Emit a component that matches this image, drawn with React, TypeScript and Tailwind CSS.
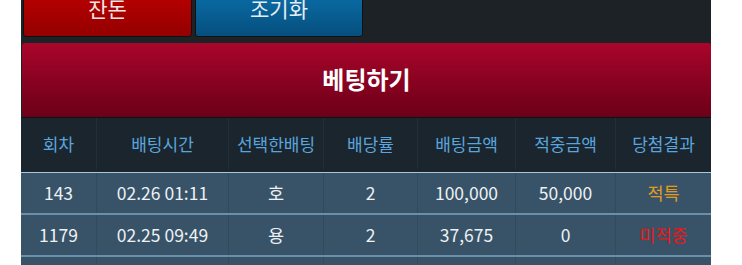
const cols = "grid grid-cols-[76px_132px_95px_94px_98px_100px_95px]";

const headers = ["회차", "배팅시간", "선택한배팅", "배당률", "배팅금액", "적중금액", "당첨결과"];

const rows = [
  { round: "143", time: "02.26 01:11", pick: "호", odds: "2", bet: "100,000", win: "50,000", result: "적특", tone: "text-[#e39b1f]" },
  { round: "1179", time: "02.25 09:49", pick: "용", odds: "2", bet: "37,675", win: "0", result: "미적중", tone: "text-[#f01414]" },
  { round: "1178", time: "02.25 09:48", pick: "호", odds: "2", bet: "20,000", win: "40,000", result: "적중", tone: "text-[#e39b1f]" },
];

export default function App() {
  return (
    <div className="h-[265px] overflow-hidden bg-white font-['Noto_Sans_CJK_KR','Noto_Sans',sans-serif]">
      <div className="ml-[21px] w-[690px] bg-[#1c2226]">
        {/* top buttons, partly scrolled out of view */}
        <div className="-mt-[19px] flex gap-[3px] pl-[2px]">
          <button className="flex h-[56px] w-[169px] items-center justify-center rounded-[3px] border border-[#111] bg-gradient-to-b from-[#c20000] to-[#940000] text-[21px] text-[#f2e6e6]">
            잔돈
          </button>
          <button className="flex h-[56px] w-[168px] items-center justify-center rounded-[3px] border border-[#111] bg-gradient-to-b from-[#0b75b2] to-[#064f7e] text-[21px] text-[#e6eef4]">
            조기화
          </button>
        </div>

        {/* bet button */}
        <div className="mt-[6px] pl-[1px]">
          <button className="flex h-[74px] w-full items-center justify-center rounded-[3px] bg-gradient-to-b from-[#a9062b] to-[#6c0018] pb-[2px] text-[24px] font-bold text-white">
            베팅하기
          </button>
        </div>
        <div className="h-[1px] bg-[#0e1216]" />

        {/* table */}
        <div className={`${cols} h-[55px] border-b border-[#a8c6dc] bg-[#1b252e] pb-[3px] text-[17px] text-[#5aa5de]`}>
          {headers.map((h, i) => (
            <div key={h} className={`flex items-center justify-center ${i < headers.length - 1 ? "border-r border-[#222e38]" : ""}`}>
              {h}
            </div>
          ))}
        </div>
        {rows.map((r) => (
          <div key={r.round} className={`${cols} h-[42px] border-b-2 border-[#6a8fab] bg-[#385368] text-[17.5px] text-[#edf1f4]`}>
            <div className="flex items-center justify-center border-r border-[#304a5e]">{r.round}</div>
            <div className="flex items-center justify-center border-r border-[#304a5e]">{r.time}</div>
            <div className="flex items-center justify-center border-r border-[#304a5e]">{r.pick}</div>
            <div className="flex items-center justify-center border-r border-[#304a5e]">{r.odds}</div>
            <div className="flex items-center justify-center border-r border-[#304a5e]">{r.bet}</div>
            <div className="flex items-center justify-center border-r border-[#304a5e]">{r.win}</div>
            <div className={`flex items-center justify-center ${r.tone}`}>{r.result}</div>
          </div>
        ))}
      </div>
    </div>
  );
}
